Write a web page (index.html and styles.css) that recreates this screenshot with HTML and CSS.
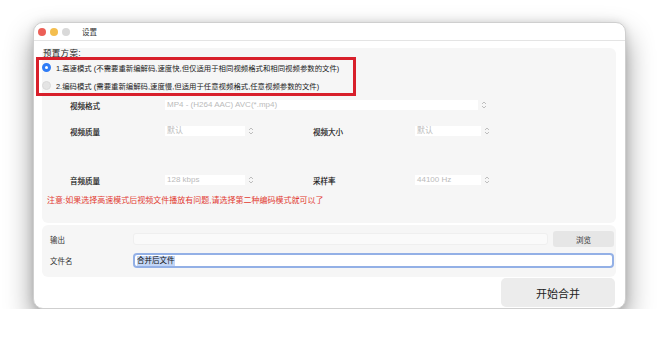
FILE: index.html
```html
<!DOCTYPE html>
<html lang="zh-CN">
<head>
  <meta charset="UTF-8">
  <title>设置</title>
  <link rel="stylesheet" href="styles.css">
</head>
<body>

  <div class="window">
    <div class="titlebar">
      <span class="light red"></span>
      <span class="light yellow"></span>
      <span class="light gray"></span>
      <span class="title">设置</span>
    </div>

    <div class="content">
      <div class="panel preset">
        <div class="legend">预置方案:</div>
        <div class="mark">
          <div class="radio-row">
            <span class="radio checked"></span>
            <span>1.高速模式 (不需要重新编解码,速度快,但仅适用于相同视频格式和相同视频参数的文件)</span>
          </div>
          <div class="radio-row">
            <span class="radio"></span>
            <span>2.编码模式 (需要重新编解码,速度慢,但适用于任意视频格式,任意视频参数的文件)</span>
          </div>
        </div>

        <div class="row row-format">
          <span class="label">视频格式</span>
          <span class="field wide">MP4 - (H264 AAC) AVC(*.mp4)</span>
          <svg class="stepper" viewBox="0 0 6 10"><path d="M1 4 L3 2 L5 4 M1 6 L3 8 L5 6"/></svg>
        </div>

        <div class="row row-quality">
          <span class="label">视频质量</span>
          <span class="field short">默认</span>
          <svg class="stepper" viewBox="0 0 6 10"><path d="M1 4 L3 2 L5 4 M1 6 L3 8 L5 6"/></svg>
          <span class="label second">视频大小</span>
          <span class="field small">默认</span>
          <svg class="stepper" viewBox="0 0 6 10"><path d="M1 4 L3 2 L5 4 M1 6 L3 8 L5 6"/></svg>
        </div>

        <div class="row row-audio">
          <span class="label">音频质量</span>
          <span class="field short">128 kbps</span>
          <svg class="stepper" viewBox="0 0 6 10"><path d="M1 4 L3 2 L5 4 M1 6 L3 8 L5 6"/></svg>
          <span class="label second">采样率</span>
          <span class="field small">44100 Hz</span>
          <svg class="stepper" viewBox="0 0 6 10"><path d="M1 4 L3 2 L5 4 M1 6 L3 8 L5 6"/></svg>
        </div>

        <div class="note">注意:如果选择高速模式后视频文件播放有问题,请选择第二种编码模式就可以了</div>
      </div>

      <div class="panel output">
        <div class="out-row">
          <span class="out-label">输出</span>
          <span class="path"></span>
          <button class="browse">浏览</button>
        </div>
        <div class="out-row name-row">
          <span class="out-label">文件名</span>
          <span class="name-field"><span class="selected">合并后文件</span></span>
        </div>
      </div>

      <div class="actions">
        <button class="start">开始合并</button>
      </div>
    </div>
  </div>

</body>
</html>
```

FILE: styles.css
```css
body {
  margin: 0;
  background-color: #fff;
  font-family: "Liberation Sans", "Noto Sans CJK SC", sans-serif;
  color: #222;
}

.window {
  width: 593px;
  height: 287px;
  margin: 22px 0 0 33px;
  box-sizing: border-box;
  background-color: #fff;
  border: 1px solid #cfcfcf;
  border-radius: 10px;
  box-shadow: 0 14px 28px rgba(0, 0, 0, 0.42), 0 0 8px rgba(0, 0, 0, 0.12);
}

.titlebar {
  height: 17px;
  display: flex;
  align-items: center;
  padding-left: 4px;
  border-bottom: 1px solid #e4e4e4;
}

.light {
  width: 8px;
  height: 8px;
  border-radius: 50%;
  margin-right: 4px;
}

.light.red { background-color: #ec5f57; }
.light.yellow { background-color: #f4be4f; }
.light.gray { background-color: #d9d9d9; }

.title {
  margin-left: 8px;
  font-size: 7.5px;
  color: #333;
}

.content {
  padding: 7px 9px 0 8px;
}

.panel {
  background-color: #f6f6f6;
  border-radius: 6px;
}

.preset {
  height: 175px;
  display: flex;
  flex-direction: column;
}

.legend {
  height: 10px;
  line-height: 10px;
  font-size: 8.5px;
  padding-left: 1px;
  letter-spacing: 0.3px;
}

.mark {
  width: 320px;
  height: 39px;
  box-sizing: border-box;
  margin: -1px 0 0 -6px;
  border: 3px solid #d81f2b;
  display: flex;
  flex-direction: column;
  gap: 4px;
}

.radio-row {
  height: 14px;
  display: flex;
  align-items: center;
  font-size: 7.4px;
  padding-left: 3px;
}

.radio {
  width: 9px;
  height: 9px;
  box-sizing: border-box;
  border-radius: 50%;
  margin-right: 5px;
  background-color: #e4e4e4;
  border: 1px solid #dadada;
}

.radio.checked {
  background-color: #2f7cf6;
  border: 3px solid #2f7cf6;
  position: relative;
}

.radio.checked::after {
  content: "";
  position: absolute;
  left: 0;
  top: 0;
  width: 3px;
  height: 3px;
  border-radius: 50%;
  background-color: #fff;
}

.row {
  height: 14px;
  display: flex;
  align-items: center;
  padding-left: 28px;
}

.row-format { margin-top: 2px; }
.row-quality { margin-top: 12px; }
.row-audio { margin-top: 35px; }

.label {
  width: 95px;
  font-size: 7.5px;
  color: #111;
  -webkit-text-stroke: 0.15px #111;
}

.label.second {
  width: 102px;
  margin-left: 59px;
}

.field {
  height: 10px;
  line-height: 10px;
  background-color: #fff;
  font-size: 8px;
  color: #bbb;
  padding-left: 2px;
  box-sizing: border-box;
  white-space: nowrap;
}

.field.wide { width: 313px; }
.field.short { width: 80px; }
.field.small { width: 66px; }

.stepper {
  width: 6px;
  height: 10px;
  margin-left: 3px;
}

.stepper path {
  fill: none;
  stroke: #b0b0b0;
  stroke-width: 0.8;
}

.note {
  margin-top: 8px;
  height: 12px;
  line-height: 12px;
  padding-left: 5px;
  font-size: 8px;
  color: #e23b32;
}

.output {
  height: 52px;
  margin-top: 2px;
  padding: 6px 2px 0 8px;
  box-sizing: border-box;
}

.out-row {
  height: 16px;
  display: flex;
  align-items: center;
}

.name-row {
  height: 15px;
  margin-top: 6px;
}

.out-label {
  width: 83px;
  font-size: 7.5px;
  color: #333;
}

.path {
  width: 415px;
  height: 12px;
  background-color: #fafafa;
  border: 1px solid #efefef;
  box-sizing: border-box;
  border-radius: 3px;
}

.browse {
  width: 61px;
  height: 16px;
  margin-left: 5px;
  padding: 0;
  border: none;
  border-radius: 3px;
  background-color: #e6e6e6;
  font-family: inherit;
  font-size: 7.5px;
  color: #333;
}

.name-field {
  width: 481px;
  height: 15px;
  box-sizing: border-box;
  border: 2px solid #93b0e6;
  border-radius: 4px;
  background-color: #fff;
  display: flex;
  align-items: center;
  padding-left: 2px;
}

.selected {
  font-size: 7.5px;
  line-height: 10px;
  background-color: #c3d6f6;
  color: #111;
}

.actions {
  display: flex;
  justify-content: flex-end;
  margin-top: 1px;
}

.start {
  width: 114px;
  height: 29px;
  margin-right: 1px;
  border: none;
  border-radius: 5px;
  background-color: #ececec;
  font-family: inherit;
  font-size: 11px;
  color: #222;
}
```
